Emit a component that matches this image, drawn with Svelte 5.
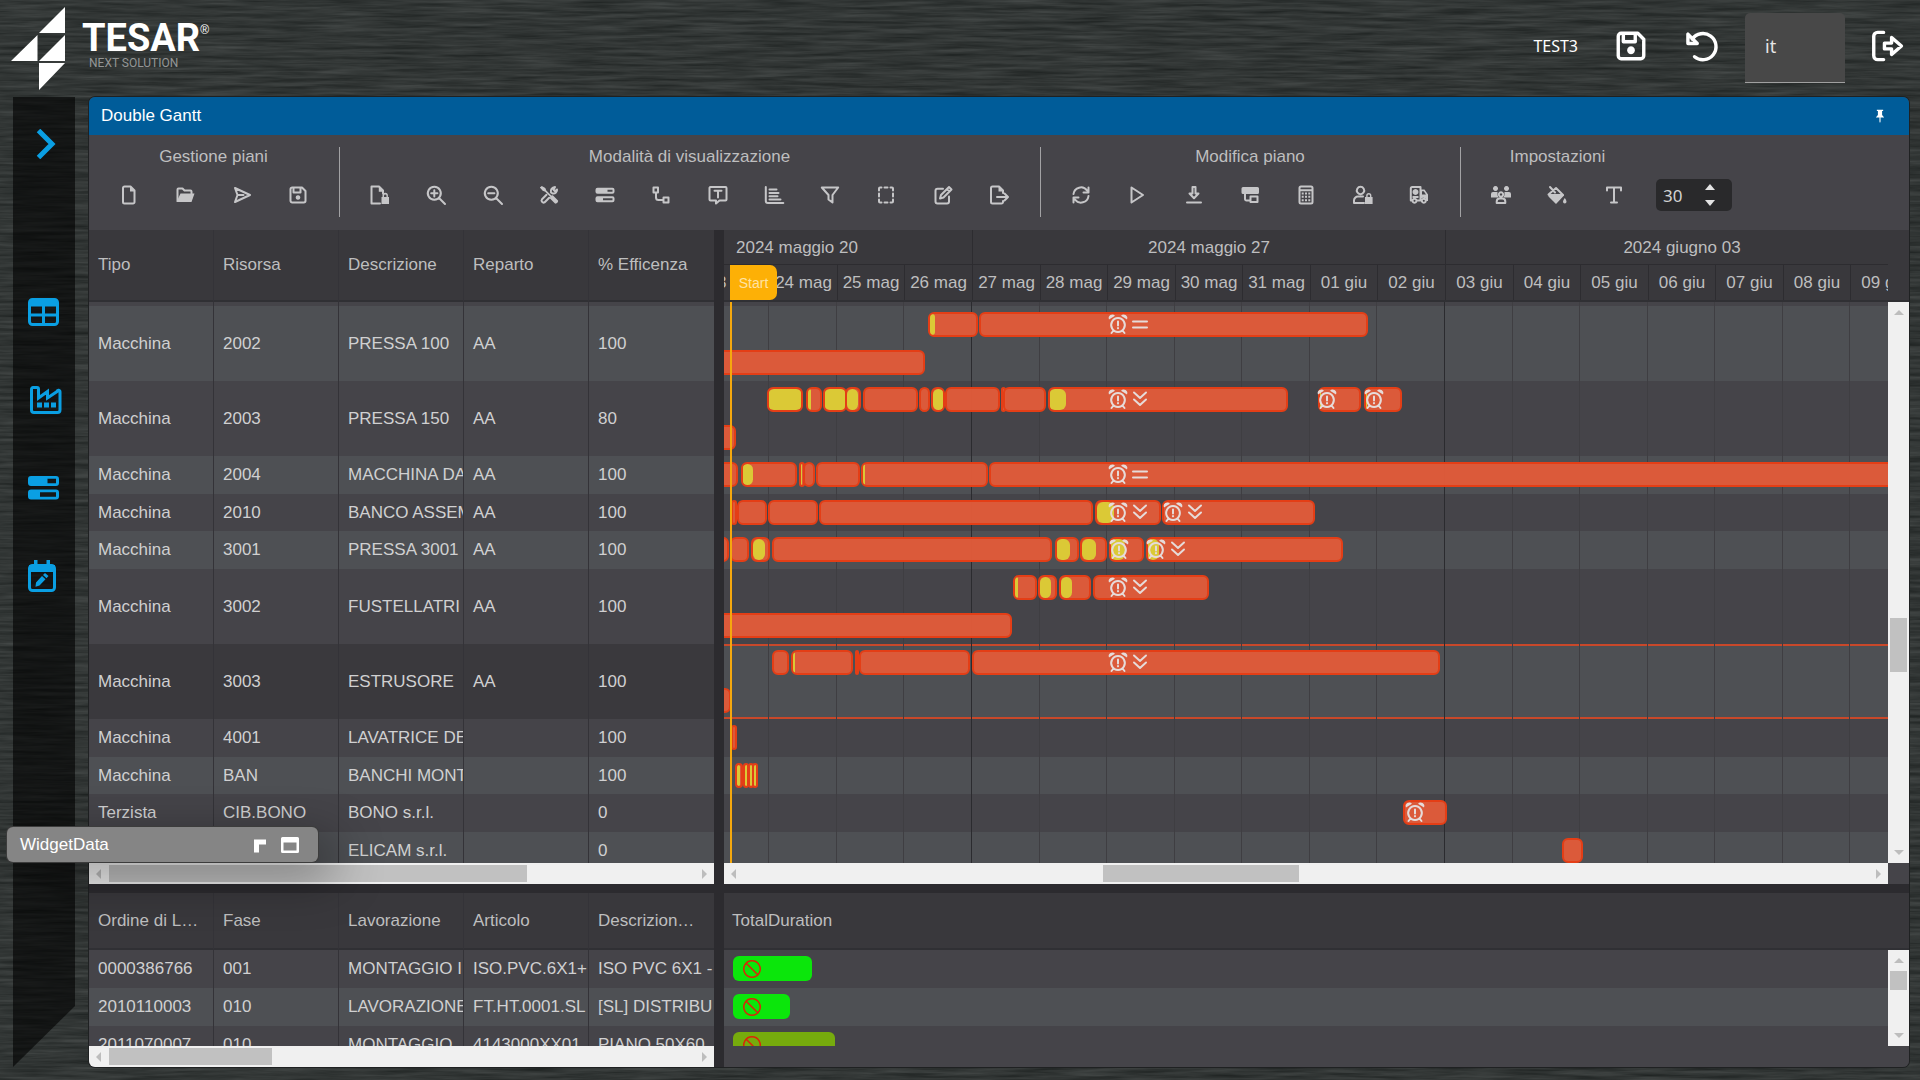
<script>
  // Icon shapes on a 20x20 grid: s = stroked outline, f = filled areas.
  const icons = {
    file: { s: 'M5.500 1.500h6l4 4v11.500a1.500 1.500 0 0 1-1.500 1.500h-8.500a1.500 1.500 0 0 1-1.500-1.500v-14a1.500 1.500 0 0 1 1.500-1.500z', f: 'M11 1.500v5h5z' },
    folder: { s: 'M2.500 16v-11.500a1 1 0 0 1 1-1h4l2 2h6a1 1 0 0 1 1 1v2', f: 'M5.500 8.500h14l-3 8.500h-15z' },
    send: { s: 'M3 3l15 7-15 7 2.500-7zM5.500 10h6', f: '' },
    save: { s: 'M4.200 2.500h9.800l3.500 3.500v9.800a1.700 1.700 0 0 1-1.700 1.700h-11.600a1.700 1.700 0 0 1-1.700-1.700v-11.600a1.700 1.700 0 0 1 1.700-1.700zM5.500 3v4.500h7v-4.500', f: 'M10 10.200a2.300 2.300 0 1 0 .01 0z' },
    fileLock: { s: 'M10 18.500h-8.500v-17h7.500l4 4v3', f: 'M8.800 1.500v5.200h5zM12.500 12v-1.500a2.700 2.700 0 0 1 5.400 0v1.500h1.100v7h-7.500v-7zM14 12h2.500v-1.300a1.200 1.200 0 0 0-2.500 0z' },
    zoomIn: { s: 'M8.300 1.800a6.500 6.500 0 1 0 .01 0zM13 13l6 6M8.300 5.200v6.200M5.200 8.300h6.200', f: '' },
    zoomOut: { s: 'M8.300 1.800a6.500 6.500 0 1 0 .01 0zM13 13l6 6M5.200 8.300h6.200', f: '' },
    tools: { s: 'M18 4.500c.5 2.500-1.800 4.500-4.500 4l-1.500-1c-.8-2.500 1-5.300 4-5.500l-1.500 2.800 1.500 1.500zM3 14.300l4.500-4.500M5.700 17.200l4.500-4.500M3 14.300a2 2 0 0 0 2.700 2.900', f: 'M.8 2.500l2-1.500 3.500 2 1 2.500 5 5 1.500-.3 5.200 5.300c.8 1-1.700 3.800-3 3l-5-5 .2-1.700-5-5-2.500-1z' },
    toggles: { s: '', f: 'M2.500 2.800h15a2 2 0 0 1 2 2v2a2 2 0 0 1-2 2h-15a2 2 0 0 1-2-2v-2a2 2 0 0 1 2-2zM12.500 4.800v2h5v-2zM2.500 11.200h15a2 2 0 0 1 2 2v2a2 2 0 0 1-2 2h-15a2 2 0 0 1-2-2v-2a2 2 0 0 1 2-2zM8 13.200v2h9.500v-2z' },
    route: { s: 'M2.500 2.500h4.500v5h-4.500zM12.500 12.500h5v5h-5zM5 7.500v5a2.500 2.500 0 0 0 2.500 2.500h5', f: '' },
    comment: { s: 'M2.500 2h15a1 1 0 0 1 1 1v11.500a1 1 0 0 1-1 1h-6l-3.500 3v-3h-5.500a1 1 0 0 1-1-1v-11.500a1 1 0 0 1 1-1zM6.500 5.800h7M10 5.800v6.700', f: '' },
    bars: { s: 'M1.800 2v14a2 2 0 0 0 2 2h15.500M5.500 4.500h7M5.500 8h9M5.500 11.300h8M5.500 14.500h11', f: '' },
    filter: { s: 'M1.800 2.500h16.400l-5.700 7.500v7.500l-4-3v-4.500z', f: '' },
    select: { s: 'M3 5.500v-2a1 1 0 0 1 1-1h1.500M8.500 2.500h3M14.500 2.500h1.500a1 1 0 0 1 1 1v2M17 8.500v3M17 14.500v2a1 1 0 0 1-1 1h-1.500M11.500 17.500h-3M5.500 17.500h-1.500a1 1 0 0 1-1-1v-2M3 11.500v-3', f: '' },
    edit: { s: 'M10 3.800h-5.500a2 2 0 0 0-2 2v10.700a2 2 0 0 0 2 2h9.500a2 2 0 0 0 2-2v-5M7 13.500l1-3.500 8-8 2.500 2.500-8 8zM14 4l2.500 2.500', f: '' },
    export: { s: 'M14 8v-2.500l-4-4h-6.500a1.500 1.500 0 0 0-1.500 1.500v14a1.500 1.500 0 0 0 1.500 1.500h9a1.500 1.500 0 0 0 1.500-1.500v-1M8 12h10.500M15.500 8.500l3.500 3.500-3.500 3.500', f: 'M9.500 1.500v5h5z' },
    refresh: { s: 'M2.500 9a7.500 7.500 0 0 1 13.500-3.500M17.500 11a7.500 7.500 0 0 1-13.500 3.500M17.500 2.500v5h-5M2.500 17.500v-5h5', f: '' },
    play: { s: 'M4.500 2.500l11.500 7.500-11.500 7.500z', f: '' },
    download: { s: 'M8.500 2h3v6.500h3l-4.500 4.800-4.500-4.800h3zM3 17.500h14', f: '' },
    layers: { s: 'M5 7v7a1.500 1.500 0 0 0 1.500 1.500h4M10.500 11.500h7v5.500h-7z', f: 'M3 2h14.500a1.500 1.500 0 0 1 1.500 1.500v4a1.500 1.500 0 0 1-1.500 1.500h-14.500a1.500 1.500 0 0 1-1.500-1.500v-4a1.500 1.500 0 0 1 1.500-1.500z' },
    calc: { s: 'M5 1.500h10a1.500 1.500 0 0 1 1.500 1.500v14a1.500 1.500 0 0 1-1.500 1.500h-10a1.500 1.500 0 0 1-1.500-1.500v-14a1.500 1.500 0 0 1 1.500-1.500zM4 5.200h12', f: 'M5.700 7.500h2v2h-2zM9 7.500h2v2h-2zM12.300 7.500h2v2h-2zM5.700 10.800h2v2h-2zM9 10.800h2v2h-2zM12.300 10.800h2v2h-2zM5.700 14.200h2v2h-2zM9 14.200h2v2h-2zM12.300 14.200h2v2h-2z' },
    userLock: { s: 'M7.500 1.800a3.700 3.700 0 1 0 .01 0zM11 18h-10v-2.500a4 4 0 0 1 4-4h5', f: 'M13.200 12v-1.500a2.600 2.600 0 0 1 5.200 0v1.500h1.200v7h-7.600v-7zM14.600 12h2.400v-1.300a1.200 1.200 0 0 0-2.400 0z' },
    truck: { s: 'M3 15.500h-1.200v-12a1.500 1.500 0 0 1 1.500-1.500h8.200v13.500h-3.500M5.500 13.800a2 2 0 1 0 .01 0zM14.800 13.800a2 2 0 1 0 .01 0z', f: 'M6.500 4a3 3 0 1 0 .01 0zM11.500 4.500h4l3.500 5v6.500h-2a2.500 2.500 0 0 0-5.500-1zM13 6.300v3.200h4l-2.200-3.200zM3.500 11h6v2h-6z' },
    users: { s: 'M10 7.300a2.200 2.200 0 1 0 .01 0zM5.700 18v-1.500a3 3 0 0 1 3-3h2.600a3 3 0 0 1 3 3v1.500z', f: 'M4.500 1a2.500 2.500 0 1 0 .01 0zM15.500 1a2.500 2.500 0 1 0 .01 0zM0 11.500v-2.500a2 2 0 0 1 2-2h4.500v3l1 2.500h-7.500zM20 11.500v-2.500a2 2 0 0 0-2-2h-4.500v3l-1 2.500h7.500z' },
    fill: { s: 'M3 2l5 5.500M1.500 9.500l7.500-6.500 7 7', f: 'M1 9h15l1 1.500-8 8.500-7.500-7.500zM17.800 13c1 1.600 1.700 2.700 1.700 3.800a1.700 1.700 0 0 1-3.500 0c0-1.100.8-2.200 1.800-3.800z' },
    text: { s: 'M3 5.500v-3h14v3M10 2.500v15M7 17.500h6', f: '' },
    undo: { s: 'M4.800 6a7.700 7.700 0 1 1 1.400 10.300M2.300 3v5.500h5.500z', f: '' },
    logout: { s: 'M8 2h-3.500a2.300 2.300 0 0 0-2.300 2.300v11.400a2.300 2.300 0 0 0 2.300 2.300h3.500M8.500 8.300h4.200v-3.300l5.800 5-5.800 5v-3.300h-4.200z', f: '' },
    alarm: { s: 'M10 4a6.800 7 0 1 0 .01 0zM5.500 16.500l-2 2.500M14.500 16.500l2 2.500M10 7.500v4', f: 'M1 5.500a3.600 3.600 0 0 1 6-3.800zM19 5.500a3.600 3.600 0 0 0-6-3.800zM10 13a1.100 1.100 0 1 0 .01 0z' },
    equal: { s: 'M3 7.500h14M3 13.500h14', f: '' },
    down: { s: 'M4 3.500l6 5.500 6-5.500M4 10.500l6 5.500 6-5.500', f: '' },
    ban: { s: 'M10 1.800a8.200 8.200 0 1 0 .01 0zM4.200 4.200l11.600 11.600', f: '' },
    pin: { s: '', f: 'M5.500 1h9v2h-1.500v5.500l3 3.500h-5.200v6l-.8 2-.8-2v-6h-5.200l3-3.500v-5.500h-1.500z' }
  };

  const groups = [
    { title: 'Gestione piani', cls: 'g4', items: ['file', 'folder', 'send', 'save'] },
    { title: 'Modalità di visualizzazione', cls: 'g12', items: ['fileLock', 'zoomIn', 'zoomOut', 'tools', 'toggles', 'route', 'comment', 'bars', 'filter', 'select', 'edit', 'export'] },
    { title: 'Modifica piano', cls: 'g7', items: ['refresh', 'play', 'download', 'layers', 'calc', 'userLock', 'truck'] },
    { title: 'Impostazioni', cls: 'g3', items: ['users', 'fill', 'text'] }
  ];

  // Each bar: [start, end, setupStart, setupEnd]; each mark: [icon, x]. Offsets are from the left edge of the chart.
  const rows = [
    { h: 75, c: ['Macchina', '2002', 'PRESSA 100', 'AA', '100'],
      lanes: [[[204, 254, 205, 211], [255, 644]], [[-20, 201]]], marks: [['alarm', 384], ['equal', 406]] },
    { h: 75, c: ['Macchina', '2003', 'PRESSA 150', 'AA', '80'],
      lanes: [[[43, 79, 44, 78], [82, 98, 84, 87], [99, 123, 100, 123], [121, 137, 123, 134], [139, 194], [195, 206], [207, 221, 209, 220], [221, 276], [277, 282], [279, 322], [324, 564, 325, 342], [594, 637, 595, 597], [640, 678, 641, 643]], [[-20, 12]]],
      marks: [['alarm', 384], ['down', 406], ['alarm', 593], ['alarm', 640]] },
    { h: 38, c: ['Macchina', '2004', 'MACCHINA DA', 'AA', '100'],
      lanes: [[[-20, 14], [17, 73, 18, 29], [75, 81, 76, 78], [79, 91], [92, 136], [137, 264, 138, 141], [265, 2400]]], marks: [['alarm', 384], ['equal', 406]] },
    { h: 37, c: ['Macchina', '2010', 'BANCO ASSEM', 'AA', '100'],
      lanes: [[[7, 13], [13, 43], [44, 94], [95, 369], [371, 437, 373, 390], [438, 591]]], marks: [['alarm', 384], ['down', 406], ['alarm', 439], ['down', 461]] },
    { h: 38, c: ['Macchina', '3001', 'PRESSA 3001', 'AA', '100'],
      lanes: [[[-20, 5], [6, 25], [27, 46, 29, 41], [48, 328], [331, 355, 332, 346], [356, 383, 358, 372], [385, 420, 386, 401], [422, 619, 423, 435]]],
      marks: [['alarm', 385], ['alarm', 422], ['down', 444]] },
    { h: 75, c: ['Macchina', '3002', 'FUSTELLATRI', 'AA', '100'],
      lanes: [[[289, 313, 291, 294], [314, 333, 316, 327], [335, 367, 337, 348], [369, 485]], [[-20, 288]]], marks: [['alarm', 384], ['down', 406]] },
    { h: 75, picked: true, c: ['Macchina', '3003', 'ESTRUSORE', 'AA', '100'],
      lanes: [[[48, 65], [67, 129, 68, 71], [131, 135], [135, 246], [248, 716]], [[-20, 7]]], marks: [['alarm', 384], ['down', 406]] },
    { h: 38, c: ['Macchina', '4001', 'LAVATRICE DE', '', '100'], lanes: [[[7, 13]]], marks: [] },
    { h: 37, c: ['Macchina', 'BAN', 'BANCHI MONT', '', '100'],
      lanes: [[[11, 19, 13, 16], [19, 25, 21, 24], [24, 30, 26, 28], [28, 34, 30, 33]]], marks: [] },
    { h: 38, c: ['Terzista', 'CIB.BONO', 'BONO s.r.l.', '', '0'], lanes: [[[679, 723]]], marks: [['alarm', 681]] },
    { h: 37, c: ['Terzista', 'CIB.ELICAM', 'ELICAM s.r.l.', '', '0'], lanes: [[[838, 859]]], marks: [] }
  ];

  const orders = [
    { h: 38, c: ['0000386766', '001', 'MONTAGGIO I', 'ISO.PVC.6X1+', 'ISO PVC 6X1 -'], w: 79, late: false },
    { h: 38, c: ['2010110003', '010', 'LAVORAZIONE', 'FT.HT.0001.SL', '[SL] DISTRIBU'], w: 57, late: false },
    { h: 38, c: ['2011070007', '010', 'MONTAGGIO', '4143000XX01', 'PIANO 50X60'], w: 102, late: true }
  ];

  const columns = ['Tipo', 'Risorsa', 'Descrizione', 'Reparto', '% Efficenza'];
  const orderColumns = ['Ordine di L…', 'Fase', 'Lavorazione', 'Articolo', 'Descrizion…'];

  // Day columns run left to right from 23 May; a week is 473 wide, a day a seventh of it.
  const dayNames = ['23 mag', '24 mag', '25 mag', '26 mag', '27 mag', '28 mag', '29 mag', '30 mag', '31 mag', '01 giu', '02 giu', '03 giu', '04 giu', '05 giu', '06 giu', '07 giu', '08 giu', '09 giu', '10 giu', '11 giu', '12 giu', '13 giu'];
  const weekWidth = 473;
  const weekStart = 248;
  const edge = (i) => Math.round(weekStart + ((i - 4) * weekWidth) / 7);
  const days = dayNames.map((name, i) => ({ name, x: edge(i), w: edge(i + 1) - edge(i), monday: i % 7 === 4 }));
  const weeks = [
    { name: '2024 maggio 20', x: 0, w: weekStart, first: true },
    { name: '2024 maggio 27', x: weekStart, w: weekWidth },
    { name: '2024 giugno 03', x: weekStart + weekWidth, w: weekWidth }
  ];

  let zoom = $state(30);
  let lang = $state('it');
</script>

{#snippet icon(name)}
  <svg class="icon" viewBox="0 0 20 20" aria-hidden="true">
    {#if icons[name].s}<path class="line" d={icons[name].s} />{/if}
    {#if icons[name].f}<path class="solid" d={icons[name].f} />{/if}
  </svg>
{/snippet}

{#snippet hscroll(cls)}
  <div class="hscroll {cls}" aria-hidden="true">
    <i class="arrow left"></i>
    <div class="track"><div class="thumb"></div></div>
    <i class="arrow right"></i>
  </div>
{/snippet}

{#snippet vscroll(cls)}
  <div class="vscroll {cls}" aria-hidden="true">
    <i class="arrow up"></i>
    <div class="track"><div class="thumb"></div></div>
    <i class="arrow down"></i>
  </div>
{/snippet}

<div class="app">
  <svg class="wood" aria-hidden="true">
    <filter id="grain" x="0" y="0" width="100%" height="100%" color-interpolation-filters="sRGB">
      <feTurbulence type="fractalNoise" baseFrequency="0.016 0.28" numOctaves="4" seed="7" />
      <feColorMatrix values="0.18 0 0 0 0.105  0.18 0 0 0 0.122  0.18 0 0 0 0.118  0 0 0 0 1" />
    </filter>
    <rect width="100%" height="100%" filter="url(#grain)" />
  </svg>

  <header class="topbar">
    <a class="brand" href="#home" aria-label="Tesar Next Solution">
      <svg class="mark" viewBox="0 0 54 84" aria-hidden="true">
        <path d="M54 0v26H28zM26.500 28v26H0zM54 28v26H28zM28 56h26L28 83z" class="solid" />
      </svg>
      <span class="words">
        <span class="name">TESAR<sup>®</sup></span>
        <span class="tag">NEXT SOLUTION</span>
      </span>
    </a>
    <div class="tools">
      <span class="user">TEST3</span>
      <button aria-label="Salva">{@render icon('save')}</button>
      <button aria-label="Annulla">{@render icon('undo')}</button>
      <select class="lang" aria-label="Lingua" bind:value={lang}>
        <option value="it">it</option>
        <option value="en">en</option>
      </select>
      <button class="exit" aria-label="Esci">{@render icon('logout')}</button>
    </div>
  </header>

  <div class="main">
    <nav class="side" aria-label="Menu">
      <button class="expand" aria-label="Espandi">
        <svg viewBox="0 0 20 30"><path d="M2.500 1.500L16 15 2.500 28.500" fill="none" stroke="currentColor" stroke-width="5" /></svg>
      </button>
      <button aria-label="Tabella">
        <svg viewBox="0 0 32 28">
          <rect x="1.500" y="1.500" width="28" height="25" rx="3" fill="none" stroke="currentColor" stroke-width="3" />
          <path d="M1 2h29v6.500H1zM14 8h3v18h-3zM2 15.500h28v3H2z" fill="currentColor" />
        </svg>
      </button>
      <button aria-label="Fabbrica">
        <svg class="shift" viewBox="0 0 32 28">
          <path d="M1.500 24V3a1.500 1.500 0 0 1 1.500-1.500h4a1.500 1.500 0 0 1 1.500 1.500v9l9-6.500v6.500l9.500-6.500a1 1 0 0 1 3 .5V24a2.500 2.500 0 0 1-2.500 2.500h-23.500A2.500 2.500 0 0 1 1.500 24z" fill="none" stroke="currentColor" stroke-width="3" />
          <path d="M7 16.500h5v5H7zM14 16.500h5v5h-5zM21 16.500h5v5h-5z" fill="currentColor" />
        </svg>
      </button>
      <button aria-label="Risorse">
        <svg viewBox="0 0 32 28">
          <path fill-rule="evenodd" d="M3 2h25a3 3 0 0 1 3 3v4a3 3 0 0 1-3 3H3a3 3 0 0 1-3-3V5a3 3 0 0 1 3-3zM19.500 4.800v4.400h8.500V4.800zM3 15.500h25a3 3 0 0 1 3 3v4a3 3 0 0 1-3 3H3a3 3 0 0 1-3-3v-4a3 3 0 0 1 3-3zM12 18.300v4.400h16v-4.400z" fill="currentColor" />
        </svg>
      </button>
      <button aria-label="Calendario">
        <svg class="cal" viewBox="0 0 28 32">
          <rect x="1.500" y="5.500" width="25" height="25" rx="3" fill="none" stroke="currentColor" stroke-width="3" />
          <path d="M1 5h26v7H1zM6 0h3.500v6H6zM18.500 0H22v6h-3.500zM8 22.500l6-6.500 3.500 3.300-6 6.200-4 1.300zM15 15l2-2 3.500 3-2 2.300z" fill="currentColor" />
        </svg>
      </button>
    </nav>

    <section class="panel">
      <div class="title">
        <h1>Double Gantt</h1>
        <button aria-label="Blocca">{@render icon('pin')}</button>
      </div>

      <div class="toolbar">
        {#each groups as g}
          <div class="group {g.cls}">
            <h2>{g.title}</h2>
            <div class="buttons">
              {#each g.items as item}
                <button aria-label={item}>{@render icon(item)}</button>
              {/each}
            </div>
          </div>
        {/each}
        <div class="spinner">
          <input type="text" inputmode="numeric" aria-label="Altezza riga" bind:value={zoom} />
          <span class="steps">
            <button aria-label="Aumenta" onclick={() => zoom++}><i class="step up"></i></button>
            <button aria-label="Riduci" onclick={() => zoom--}><i class="step down"></i></button>
          </span>
        </div>
      </div>

      <div class="upper">
        <div class="grid">
          <div class="clip">
            <table>
              <thead><tr class="tall">{#each columns as c}<th>{c}</th>{/each}</tr></thead>
              <tbody>
                <tr class="sliver" aria-hidden="true">{#each columns as _}<td></td>{/each}</tr>
                {#each rows as r, i}
                  <tr class:light={i % 2 === 0} class:picked={r.picked} style:height="{r.h}px">
                    {#each r.c as cell}<td>{cell}</td>{/each}
                  </tr>
                {/each}
              </tbody>
            </table>
          </div>
          {@render hscroll('resources')}
        </div>

        <div class="gantt">
          <div class="scale">
            <div class="inner">
              {#each weeks as w}
                <div class="week" class:first={w.first} style:left="{w.x}px" style:width="{w.w}px">{w.name}</div>
              {/each}
              {#each days as d}
                <div class="day" class:monday={d.monday} style:left="{d.x}px" style:width="{d.w}px">{d.name}</div>
              {/each}
              <span class="flag">Start</span>
            </div>
          </div>
          <div class="body">
            <div class="view">
              <div class="chart">
                {#each rows as r, i}
                  <div class="row" class:light={i % 2 === 0} class:outlined={r.picked} style:height="{r.h}px"></div>
                {/each}
                {#each days as d}
                  <i class="gridline" class:monday={d.monday} style:left="{d.x - 1}px"></i>
                {/each}
                <div class="overlay">
                  {#each rows as r}
                    <div class="lane-row" style:height="{r.h}px">
                      {#each r.lanes as lane, l}
                        {#each lane as b}
                          <div class="bar" class:second={l === 1} style:left="{b[0]}px" style:width="{b[1] - b[0]}px">
                            {#if b[2]}<i class="setup" style:left="{b[2] - b[0]}px" style:width="{b[3] - b[2]}px"></i>{/if}
                          </div>
                        {/each}
                      {/each}
                      {#each r.marks as m}
                        <span class="sign" style:left="{m[1]}px">{@render icon(m[0])}</span>
                      {/each}
                    </div>
                  {/each}
                </div>
                <i class="now"></i>
              </div>
            </div>
            {@render vscroll('main-v')}
          </div>
          <div class="foot">{@render hscroll('timeline')}</div>
        </div>
      </div>

      <div class="lower">
        <div class="grid">
          <div class="clip">
            <table>
              <thead><tr class="short">{#each orderColumns as c}<th>{c}</th>{/each}</tr></thead>
              <tbody>
                {#each orders as o, i}
                  <tr class:light={i % 2 === 1} style:height="{o.h}px">
                    {#each o.c as cell}<td>{cell}</td>{/each}
                  </tr>
                {/each}
              </tbody>
            </table>
          </div>
          {@render hscroll('orders')}
        </div>
        <div class="gantt">
          <div class="total">TotalDuration</div>
          <div class="body">
            <div class="view">
              {#each orders as o, i}
                <div class="order" class:light={i % 2 === 1} style:height="{o.h}px">
                  <div class="load" class:late={o.late} style:width="{o.w}px">{@render icon('ban')}</div>
                </div>
              {/each}
            </div>
            {@render vscroll('small-v')}
          </div>
          <div class="foot"></div>
        </div>
      </div>
    </section>
  </div>

  <aside class="widget">
    <span>WidgetData</span>
    <button aria-label="Sposta"><svg viewBox="0 0 20 20"><path d="M4 4.500h12v5H9v8H4z" fill="currentColor" /></svg></button>
    <button aria-label="Ingrandisci"><svg viewBox="0 0 20 20"><path fill-rule="evenodd" d="M2.500 2h15A1.500 1.500 0 0 1 19 3.500v13a1.500 1.500 0 0 1-1.500 1.500h-15A1.500 1.500 0 0 1 1 16.500v-13A1.500 1.500 0 0 1 2.500 2zM3.500 7.500v8h13v-8z" fill="currentColor" /></svg></button>
  </aside>
</div>

<style>
  :global(body) { background: #323635; }
  .app {
    position: relative;
    isolation: isolate;
    display: flex;
    flex-direction: column;
    height: 100vh;
    min-height: 640px;
    overflow: hidden;
    color: #c9c9ca;
    font: 17px/20px 'Liberation Sans', Arial, sans-serif;
  }
  .app *, .app *::before { box-sizing: border-box; }
  .wood { position: absolute; inset: 0; z-index: -1; width: 100%; height: 100%; }
  h1, h2 { margin: 0; font: inherit; }
  button { display: grid; place-items: center; padding: 0; border: 0; background: none; color: inherit; font: inherit; cursor: pointer; }
  .icon { display: block; width: 20px; height: 20px; overflow: visible; }
  .line { fill: none; stroke: currentColor; stroke-width: 2; stroke-linejoin: round; stroke-linecap: round; }
  .solid { fill: currentColor; fill-rule: evenodd; }

  /* top bar */
  .topbar { flex: none; display: flex; justify-content: space-between; height: 97px; color: #fff; }
  .brand { display: flex; gap: 17px; padding: 7px 0 0 11px; color: #fff; text-decoration: none; }
  .mark { width: 54px; height: 84px; overflow: visible; }
  .words { display: flex; flex-direction: column; padding-top: 13px; }
  .name { font: bold 38px/36px Roboto, 'Liberation Sans', sans-serif; }
  .name sup { font: 12px/12px 'Liberation Sans', sans-serif; vertical-align: 17px; }
  .tag { padding-left: 7px; color: #949696; font: 12px/14px Roboto, 'Liberation Sans', sans-serif; }
  .tools { display: flex; align-items: flex-start; padding: 13px 18px 0 0; }
  .tools button { width: 70px; height: 66px; }
  .tools .icon { width: 34px; height: 34px; }
  .tools .exit { width: 32px; margin-left: 25px; }
  .user { padding-right: 18px; font: 16px/66px 'Noto Sans', sans-serif; }
  .lang {
    width: 100px; height: 70px; margin-left: 9px; padding: 0 20px 3px;
    border: 0; border-bottom: 1px solid #a0a0a0; border-radius: 5px 5px 0 0;
    background: #484848; color: #e6e6e6; font: 18px 'Noto Sans', sans-serif; appearance: none;
  }

  /* sidebar */
  .main { flex: 1; min-height: 0; display: flex; gap: 14px; padding: 0 11px 13px 13px; }
  .side {
    flex: none; display: flex; flex-direction: column; width: 62px; padding-top: 17px;
    background: rgba(0, 0, 0, 0.6); color: #0a9fe3;
    clip-path: polygon(0 0, 100% 0, 100% calc(100% - 61px), 0 100%);
  }
  .side button { height: 88px; padding-right: 1px; }
  .side svg { width: 32px; height: 28px; }
  .side .shift { margin-left: 4px; }
  .side .cal { width: 28px; height: 32px; margin-right: 4px; }
  .side .expand { height: 60px; margin-bottom: 94px; }
  .side .expand svg { width: 20px; height: 30px; margin-left: 5px; }

  /* panel */
  .panel {
    flex: 1; min-width: 0; display: flex; flex-direction: column;
    border-radius: 6px; background: #454449; box-shadow: 0 0 0 1px #1f2122; overflow: hidden;
  }
  .title { flex: none; display: flex; justify-content: space-between; align-items: center; height: 38px; padding: 0 20px 0 12px; background: #005c99; color: #fff; }
  .title .icon { width: 18px; height: 14px; }
  .toolbar { flex: none; display: flex; height: 95px; padding: 12px 0 0 12px; }
  .group { position: relative; flex: none; height: 70px; margin-right: 26px; text-align: center; }
  .group::after { content: ''; position: absolute; top: 0; right: -14px; width: 1px; height: 70px; background: #a2a2a4; }
  .g3.group::after { content: none; }
  .group h2 { line-height: 20px; color: #bebebf; }
  .buttons { display: flex; padding-top: 18px; }
  .buttons button { flex: 1; height: 20px; color: #c6c6c8; }
  .g4 { width: 225px; }
  .g12 { width: 675px; }
  .g7 { width: 394px; }
  .g3.group { width: 169px; margin-right: 14px; }
  .spinner { display: flex; width: 76px; height: 32px; margin-top: 32px; border-radius: 5px; background: #29292b; }
  .spinner input { width: 42px; padding: 0 0 0 7px; border: 0; background: none; color: #d2d2d2; font: 17px 'Noto Sans', sans-serif; }
  .steps { display: flex; flex-direction: column; justify-content: space-between; padding: 5px 0 5px 7px; }
  .step { display: block; border: solid transparent; border-width: 0 5px; }
  .step.up { border-bottom: 6px solid #e4e4e4; }
  .step.down { border-top: 6px solid #e4e4e4; }

  /* panes */
  .upper, .lower { display: flex; gap: 10px; background: #2c2b2f; }
  .upper { flex: 1; min-height: 0; }
  .lower { flex: none; height: 183px; padding-top: 9px; }
  .grid { flex: none; display: flex; flex-direction: column; width: 625px; background: #454449; }
  .clip { flex: 1; min-height: 0; overflow: hidden; }
  table { width: 100%; table-layout: fixed; border-collapse: separate; border-spacing: 0; }
  th, td { padding: 0 0 0 9px; border-right: 1px solid #343338; overflow: hidden; text-align: left; font-weight: normal; white-space: nowrap; }
  td { color: #d0d0d1; }
  th { border-bottom: 2px solid #303034; background: #39383c; color: #bebebf; vertical-align: middle; }
  th:last-child, td:last-child { border-right: 0; }
  .tall { height: 72px; }
  .short { height: 57px; }
  .sliver { height: 4px; }
  .light { background: #4e5054; }
  .picked { background: #3a393d; }

  .gantt { flex: 1; min-width: 0; display: flex; flex-direction: column; background: #454449; }
  .scale { flex: none; height: 72px; padding-right: 21px; border-bottom: 2px solid #303034; background: #39383c; color: #bebebf; }
  .inner { position: relative; height: 70px; overflow: hidden; }
  .week, .day { position: absolute; height: 35px; line-height: 35px; text-align: center; white-space: nowrap; border-left: 1px solid #2d2c30; }
  .week { top: 0; }
  .inner::before { content: ''; position: absolute; top: 34px; left: 0; right: 0; height: 1px; background: #2d2c30; }
  .week.first { padding-left: 12px; border-left: 0; text-align: left; }
  .day { top: 35px; }
  .flag { position: absolute; top: 35px; left: 6px; width: 47px; height: 35px; border-radius: 0 7px 7px 0; background: #fdb006; color: #ffe3a3; font-size: 14px; line-height: 36px; text-align: center; }
  .body { flex: 1; min-height: 0; display: flex; }
  .view { flex: 1; min-width: 0; overflow: hidden; }
  .chart { position: relative; padding-top: 4px; overflow: hidden; }
  .gridline { position: absolute; top: 0; bottom: 0; width: 1px; background: #3f3e42; }
  .gridline.monday { background: #2b2b2f; }
  .outlined { border-top: 2px solid #c8482a; border-bottom: 2px solid #c8482a; }
  .overlay { position: absolute; inset: 4px 0 0; }
  .lane-row { position: relative; }
  .bar { position: absolute; top: 6px; height: 25px; border: 2px solid #e43e16; border-radius: 6px; background: rgba(224, 91, 58, 0.97); overflow: hidden; }
  .bar.second { top: 44px; }
  .setup { position: absolute; top: 0; bottom: 0; margin-left: -2px; border-radius: 6px; background: #dbc936; }
  .sign { position: absolute; top: 8px; color: #e6dbd9; }
  .now { position: absolute; top: 0; bottom: 0; left: 6px; width: 2px; background: #f5a80e; }

  .total { flex: none; height: 57px; padding-left: 8px; border-bottom: 2px solid #303034; background: #39383c; line-height: 56px; color: #bebebf; }
  .order { padding: 6px 0 0 9px; }
  .load { height: 25px; padding: 3px 0 0 9px; border-radius: 6px; background: #0be60b; color: #dc2408; }
  .load.late { background: #76ab0d; }
  .load .line { stroke-width: 1.5; }

  /* scroll bars */
  .foot { flex: none; height: 21px; padding-right: 21px; }
  .hscroll, .vscroll { flex: none; display: flex; align-items: center; background: #f0f0f0; }
  .hscroll { height: 21px; padding: 0 7px; gap: 8px; }
  .vscroll { flex-direction: column; width: 21px; padding: 8px 0; gap: 8px; }
  .track { flex: 1; align-self: stretch; display: flex; padding: 2px 0; }
  .vscroll .track { flex-direction: column; padding: 0 2px; }
  .thumb { background: #c1c1c1; }
  .arrow { border: 5px solid transparent; }
  .arrow.left { border-left-width: 0; border-right-color: #bdbdbd; }
  .arrow.right { border-right-width: 0; border-left-color: #bdbdbd; }
  .arrow.up { border-top-width: 0; border-bottom-color: #bdbdbd; }
  .arrow.down { border-bottom-width: 0; border-top-color: #bdbdbd; }
  .resources .thumb { width: 71.4%; }
  .orders .thumb { width: 27.8%; }
  .timeline .thumb { width: 17.5%; margin-left: 31.9%; }
  .main-v .track { position: relative; }
  .main-v .thumb { position: absolute; top: 56.8%; left: 2px; right: 2px; height: 10.4%; }
  .small-v .thumb { height: 36%; }

  /* floating widget */
  .widget {
    position: absolute; left: 7px; top: 827px; display: flex; align-items: center; gap: 10px;
    width: 311px; height: 35px; padding: 0 18px 0 13px; border-radius: 6px;
    background: #858585; color: #fff; box-shadow: 0 0 0 1px #3c3c3c, 16px 14px 50px rgba(0, 0, 0, 0.45);
  }
  .widget span { flex: 1; }
  .widget svg { width: 20px; height: 20px; }
</style>
